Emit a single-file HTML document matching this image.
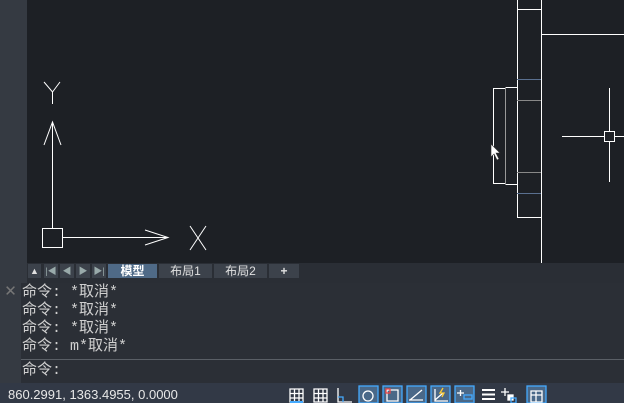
<!DOCTYPE html><html><head><style>
body{margin:0;width:624px;height:403px;overflow:hidden;background:#2a2e35;font-family:"Liberation Sans","Noto Sans CJK SC",sans-serif;position:relative}
.a{position:absolute}
.t{position:absolute;top:264px;height:14px;background:#3c424b;color:#e0e0e0;font-size:12px;line-height:14px;text-align:center}
.c{position:absolute;left:22px;color:#d0d0d0;font-size:15px;line-height:18px;font-family:"Liberation Mono","WenQuanYi Zen Hei",monospace;white-space:pre}
</style></head><body>
<div class="a" style="left:0;top:0;width:624px;height:263px;background:#1d2025"></div>
<div class="a" style="left:0;top:0;width:27px;height:283px;background:#353a42"></div>
<svg class="a" style="left:0;top:0" width="624" height="263" stroke="#fff" fill="none" stroke-width="1">
<path d="M541.5 0V263M517.5 0V217.5H541.5M517.5 9.5H541.5M541.5 34.5H624"/>
<path d="M517 79.5H541M517 193.5H541" stroke="#5a7090"/>
<path d="M517 100.5H541M517 172.5H541" stroke="#888"/>
<path d="M505.5 88.5H493.5V183.5H505.5M505.5 87.5H517.5M505.5 184.5H517.5"/>
<path d="M505.5 88V184" stroke="#999"/>
<path d="M562 136.5H604M614 136.5H624M609.5 88V131M609.5 141V182"/>
<rect x="604.5" y="131.5" width="10" height="10"/>
<path d="M491 144L491 157L494 154L497 160L499 159L496 153L500 153Z" fill="#fff" stroke="#333" stroke-width=".6"/>
<path d="M52.5 123V228M44 145L52.5 122L61 145M62 237.5H168M145 230L168 237.5L145 245M190 226L206 250M206 226L190 250M44 82L52.5 92L60 82M52.5 92V104"/>
<rect x="42.5" y="228.5" width="20" height="19"/>
</svg>
<div class="a" style="left:27px;top:263px;width:597px;height:16px;background:#2a2e35"></div>
<div class="t" style="left:28px;width:13px;font-size:9px">▲</div>
<div class="t" style="left:44px;width:14px;font-size:9px;color:#9aa">|◀</div>
<div class="t" style="left:60px;width:14px;font-size:9px;color:#9aa">◀</div>
<div class="t" style="left:76px;width:14px;font-size:9px;color:#9aa">▶</div>
<div class="t" style="left:92px;width:14px;font-size:9px;color:#9aa">▶|</div>
<div class="t" style="left:108px;width:49px;background:#4f6a87;font-weight:bold;color:#fff">模型</div>
<div class="t" style="left:159px;width:53px">布局1</div>
<div class="t" style="left:214px;width:53px">布局2</div>
<div class="t" style="left:269px;width:30px;font-weight:bold">+</div>
<div class="a" style="left:0;top:283px;width:21px;height:100px;background:#353a42;color:#777;font-size:15px;text-align:center;line-height:18px">✕</div>
<div class="a" style="left:21px;top:283px;width:603px;height:100px;background:#2b2f36"></div>
<div class="c" style="top:284px">命令: *取消*</div>
<div class="c" style="top:302px">命令: *取消*</div>
<div class="c" style="top:320px">命令: *取消*</div>
<div class="c" style="top:338px">命令: m*取消*</div>
<div class="a" style="left:21px;top:359px;width:603px;height:1px;background:#5a5f66"></div>
<div class="c" style="top:362px">命令:</div>
<div class="a" style="left:0;top:383px;width:624px;height:20px;background:#323946"></div>
<div class="a" style="left:8px;top:387px;color:#e8e8e8;font-size:13px;line-height:16px">860.2991, 1363.4955, 0.0000</div>
<svg class="a" style="left:285px;top:385px" width="339" height="18" fill="none" stroke="#fff" stroke-width="1.3">
<path d="M5 4h13v13H5zM5 8.5h13M5 13h13M9.5 4v13M14 4v13"/><path d="M5 17h13" stroke="#4af" stroke-width="2"/>
<path d="M29 4h13v13H29zM29 8.5h13M29 13h13M33.5 4v13M38 4v13"/>
<path d="M53 3v14h14"/><path d="M53 12h5v5" stroke="#4af"/>
<rect x="74" y="1" width="19" height="17" fill="#4a6888" stroke="#4af"/><circle cx="83" cy="11" r="5"/>
<rect x="98" y="1" width="19" height="17" fill="#4a6888" stroke="#4af"/><path d="M102 5h11v11h-11z"/><rect x="101" y="4" width="4" height="4" stroke="#e44"/>
<rect x="122" y="1" width="19" height="17" fill="#4a6888" stroke="#4af"/><path d="M125 15l12-10M124 15h14"/>
<rect x="146" y="1" width="19" height="17" fill="#4a6888" stroke="#4af"/><path d="M150 4v12h13M150 15l8-7"/><path d="M158 3l-3 5h4l-2 4" stroke="#fc3"/>
<rect x="170" y="1" width="19" height="17" fill="#4a6888" stroke="#4af"/><path d="M172 8h7M175.5 5v6"/><rect x="179" y="10" width="8" height="4" stroke="#4af"/>
<path d="M197 5h13M197 9.5h13M197 14h13" stroke-width="2"/>
<path d="M220 3v8M216 7h8"/><rect x="223" y="10" width="5" height="5" fill="#fff"/><rect x="226" y="13" width="5" height="5" stroke="#4af"/>
<rect x="242" y="1" width="19" height="17" fill="#4a6888" stroke="#4af"/><path d="M246 6h11v11h-11zM246 10h11M251 6v11"/>
</svg>
</body></html>
